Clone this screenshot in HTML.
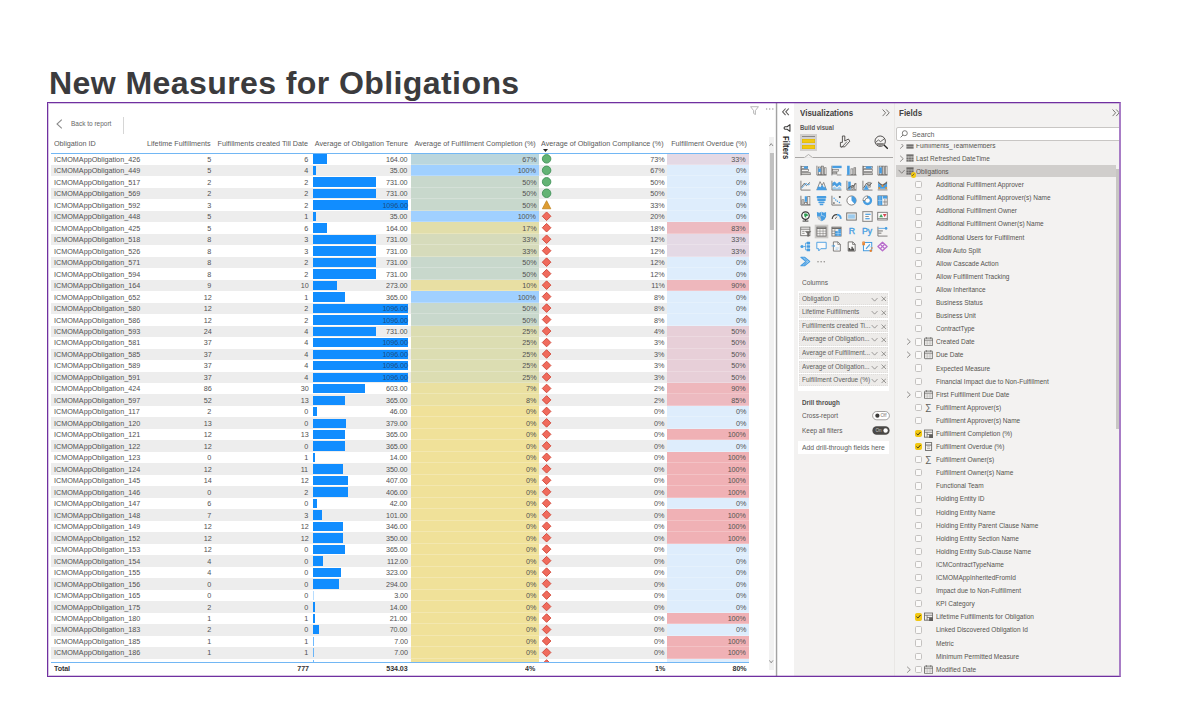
<!DOCTYPE html>
<html lang="en"><head><meta charset="utf-8"><title>New Measures for Obligations</title>
<style>
*{box-sizing:border-box}
html,body{margin:0;padding:0;background:#fff}
body{width:1182px;height:710px;position:relative;overflow:hidden;font-family:"Liberation Sans",sans-serif;color:#444}
.abs,.r,.r>*,.f,.f>*,.vi,.well,.well>*{position:absolute}
h1{position:absolute;left:49.2px;top:67.4px;margin:0;font:bold 30.7px/34px "Liberation Sans",sans-serif;letter-spacing:.37px;color:#3b3b3d;white-space:nowrap;transform:scaleX(1.045);transform-origin:0 0}
#frame{position:absolute;left:47px;top:102px;width:1074px;height:575px;border:1px solid #7030a0;border-right:2px solid #a87cc6;background:#fff;overflow:hidden}
#frame:before{content:"";position:absolute;left:0;top:0;right:0;bottom:0;border:1px solid rgba(112,48,160,.28);border-right:0;pointer-events:none;z-index:50}
/* everything inside #in is positioned in page coordinates */
#in{position:absolute;left:-48px;top:-103px;width:1182px;height:710px}
/* table */
.hd{position:absolute;top:138.1px;height:11px;font-size:7.9px;line-height:11px;color:#5a5a5a;white-space:nowrap;transform:scaleX(.914);transform-origin:100% 50%}
.r{left:51px;width:698px;height:11.48px;font-size:7.9px;line-height:12.1px;color:#525252;white-space:nowrap}
.r>span{transform:scaleX(.914);transform-origin:100% 50%;letter-spacing:-.1px}
.r>span.c1{transform-origin:0 50%;letter-spacing:0}
.r.alt{background:#ededed}
.r>span{top:.4px;height:11.48px}
.r .c1{left:2.6px}
.r .c2{right:537.7px}
.r .c3{right:440.6px}
.r .c4{right:341.4px}
.r .c4.w{color:#1a4f86}
.r .c5{right:213px}
.r .c6{right:84.3px}
.r .c7{right:3.1px}
.r .bar{left:262.4px;top:1.1px;height:9.3px;background:#118dff}
.r .cb{left:359.6px;width:128px;top:0;height:11.48px;box-shadow:inset 0 -1px 0 rgba(255,255,255,.22)}
.r .ob{left:616.4px;width:81.6px;top:0;height:11.48px;box-shadow:inset 0 -1px 0 rgba(255,255,255,.22)}
.r .ic{left:490.15px;top:.1px;width:10px;height:10px}
.ln{position:absolute;left:51px;width:698px;height:1px;background:#72b7f4}
.tot{position:absolute;top:663.2px;height:11px;font:bold 7.9px/11px "Liberation Sans",sans-serif;letter-spacing:-.1px;color:#333;white-space:nowrap;transform:scaleX(.9);transform-origin:100% 50%}
/* panes */
#viz{position:absolute;left:794px;top:103px;width:99.5px;height:574px;background:#f3f2f1}
#fld{position:absolute;left:893.5px;top:103px;width:227px;height:574px;background:#f3f2f1;border-left:1px solid #e9e7e5}
.pt{position:absolute;font:bold 8.75px/12px "Liberation Sans",sans-serif;color:#43413f;white-space:nowrap;transform:scaleX(.914);transform-origin:0 50%}
.sm{position:absolute;font-size:7.1px;line-height:10px;color:#5b5957;white-space:nowrap;transform:scaleX(.914);transform-origin:0 50%}
.vi{width:11px;height:11px}
.vi svg{position:absolute;left:0;top:0;width:11px;height:11px;overflow:visible}
.vi.sel{background:#cbc9c7;box-shadow:0 0 0 1.3px #cbc9c7}
.vt{position:absolute;left:0;top:.6px;width:11px;text-align:center;font:8.8px/11px "Liberation Sans",sans-serif;color:#479de1;letter-spacing:-.2px;-webkit-text-stroke:.35px #479de1}
.vt.py{font-size:8.8px;left:-1px;top:-.2px;width:13px}
.dots{position:absolute;left:.6px;top:.3px;width:12px;font:bold 9px/11px "Liberation Sans",sans-serif;color:#8a8886;letter-spacing:.4px}
.well{left:799.2px;width:88.6px;height:12.2px;background:#edebe9;border:1px dotted #e0dedc;font-size:7.1px;line-height:10.4px;color:#605e5c;white-space:nowrap}
.well span{left:1.4px;top:0;transform:scaleX(.914);transform-origin:0 50%}
.well .wv{right:8.6px;top:3px;width:7.2px;height:5.4px}
.well .wx{right:.6px;top:2.8px;width:5.6px;height:5.6px}
/* fields */
.f{left:896px;width:220px;height:13px;font-size:7.2px;line-height:13px;color:#55534f;white-space:nowrap}
.f .ck{left:18.9px;top:2.9px;width:7.3px;height:7.3px;border:1px solid #c4c2c0;border-radius:1.6px;background:#fbfaf9}
.f .ck.on{background:#f2c811;border-color:#f2c811}
.f .ck svg{position:absolute;left:-.8px;top:-.8px;width:7px;height:7px}
.f .chev{left:10.4px;top:2.9px;width:5.6px;height:7.4px}
.f .ti{left:28.2px;top:1.9px;width:9.2px;height:9.2px}
.f .sg{left:29px;top:0;font-size:9px;line-height:13px;color:#605e5c}
.f .fl{left:39.8px;top:0;transform:scaleX(.905);transform-origin:0 50%}
</style></head>
<body>
<h1>New Measures for Obligations</h1>
<div id="frame"><div id="in">

<!-- back to report -->
<svg class="abs" style="left:56.4px;top:119px;width:7px;height:10px" viewBox="0 0 7 10"><path d="M5.8.6 1 5 5.8 9.4" fill="none" stroke="#8a8a8a" stroke-width="1.05"/></svg>
<div class="sm" style="left:70.6px;top:119px;font-size:7.1px;color:#666">Back to report</div>
<div class="abs" style="left:123.4px;top:116.6px;width:1px;height:17px;background:#d6d6d6"></div>

<!-- visual header icons -->
<svg class="abs" style="left:749.6px;top:105.6px;width:9px;height:9.6px" viewBox="0 0 9 9.6"><path d="M.6.7H8.4L5.4 4.6V8.6L3.6 7.4V4.6z" fill="none" stroke="#a6a6a6" stroke-width=".8" stroke-linejoin="round"/></svg>
<svg class="abs" style="left:765px;top:107px;width:10px;height:4px" viewBox="0 0 10 4"><circle cx="1.6" cy="2.1" r=".75" fill="#a3a3a3"/><circle cx="4.7" cy="2.1" r=".75" fill="#a3a3a3"/><circle cx="7.8" cy="2.1" r=".75" fill="#a3a3a3"/></svg>

<!-- header -->
<div class="hd" style="left:53.5px;transform-origin:0 50%">Obligation ID</div>
<div class="hd" style="right:971px">Lifetime Fulfillments</div>
<div class="hd" style="right:874.2px">Fulfillments created Till Date</div>
<div class="hd" style="right:774.2px">Average of Obligation Tenure</div>
<div class="hd" style="right:646.6px">Average of Fulfillment Completion (%)</div>
<div class="hd" style="left:541.2px;transform-origin:0 50%">Average of Obligation Compliance (%)</div>
<div class="hd" style="right:435.4px">Fulfillment Overdue (%)</div>
<svg class="abs" style="left:542.6px;top:149.2px;width:5px;height:3px" viewBox="0 0 5 3"><path d="M0 0H5L2.5 3z" fill="#252423"/></svg>

<!-- rows -->
<div class="abs" style="left:0;top:152.9px;width:776px;height:509.1px;overflow:hidden"><div class="abs" style="left:0;top:-152.9px;width:776px;height:700px">
<div class="r" style="top:153.40px"><i class="cb" style="background:#bad6dd"></i><i class="ob" style="background:#e4d9e5"></i><i class="bar" style="width:14.1px"></i><span class="c1">ICMOMAppObligation_426</span><span class="c2">5</span><span class="c3">6</span><span class="c4">164.00</span><span class="c5">67%</span><span class="c6">73%</span><span class="c7">33%</span></div>
<div class="r alt" style="top:164.88px"><i class="cb" style="background:#a0d0ff"></i><i class="ob" style="background:#deedfc"></i><i class="bar" style="width:3.0px"></i><span class="c1">ICMOMAppObligation_449</span><span class="c2">5</span><span class="c3">4</span><span class="c4">35.00</span><span class="c5">100%</span><span class="c6">67%</span><span class="c7">0%</span></div>
<div class="r" style="top:176.36px"><i class="cb" style="background:#c8d8cc"></i><i class="ob" style="background:#deedfc"></i><i class="bar" style="width:62.8px"></i><span class="c1">ICMOMAppObligation_517</span><span class="c2">2</span><span class="c3">2</span><span class="c4">731.00</span><span class="c5">50%</span><span class="c6">50%</span><span class="c7">0%</span></div>
<div class="r alt" style="top:187.84px"><i class="cb" style="background:#c8d8cc"></i><i class="ob" style="background:#deedfc"></i><i class="bar" style="width:62.8px"></i><span class="c1">ICMOMAppObligation_569</span><span class="c2">2</span><span class="c3">2</span><span class="c4">731.00</span><span class="c5">50%</span><span class="c6">50%</span><span class="c7">0%</span></div>
<div class="r" style="top:199.32px"><i class="cb" style="background:#c8d8cc"></i><i class="ob" style="background:#deedfc"></i><i class="bar" style="width:94.2px"></i><span class="c1">ICMOMAppObligation_592</span><span class="c2">3</span><span class="c3">2</span><span class="c4 w">1096.00</span><span class="c5">50%</span><span class="c6">33%</span><span class="c7">0%</span></div>
<div class="r alt" style="top:210.80px"><i class="cb" style="background:#a0d0ff"></i><i class="ob" style="background:#deedfc"></i><i class="bar" style="width:3.0px"></i><span class="c1">ICMOMAppObligation_448</span><span class="c2">5</span><span class="c3">1</span><span class="c4">35.00</span><span class="c5">100%</span><span class="c6">20%</span><span class="c7">0%</span></div>
<div class="r" style="top:222.28px"><i class="cb" style="background:#e2deaa"></i><i class="ob" style="background:#edbbc1"></i><i class="bar" style="width:14.1px"></i><span class="c1">ICMOMAppObligation_425</span><span class="c2">5</span><span class="c3">6</span><span class="c4">164.00</span><span class="c5">17%</span><span class="c6">18%</span><span class="c7">83%</span></div>
<div class="r alt" style="top:233.76px"><i class="cb" style="background:#d6dbbb"></i><i class="ob" style="background:#e4d9e5"></i><i class="bar" style="width:62.8px"></i><span class="c1">ICMOMAppObligation_518</span><span class="c2">8</span><span class="c3">3</span><span class="c4">731.00</span><span class="c5">33%</span><span class="c6">12%</span><span class="c7">33%</span></div>
<div class="r" style="top:245.24px"><i class="cb" style="background:#d6dbbb"></i><i class="ob" style="background:#e4d9e5"></i><i class="bar" style="width:62.8px"></i><span class="c1">ICMOMAppObligation_526</span><span class="c2">8</span><span class="c3">3</span><span class="c4">731.00</span><span class="c5">33%</span><span class="c6">12%</span><span class="c7">33%</span></div>
<div class="r alt" style="top:256.72px"><i class="cb" style="background:#c8d8cc"></i><i class="ob" style="background:#deedfc"></i><i class="bar" style="width:62.8px"></i><span class="c1">ICMOMAppObligation_571</span><span class="c2">8</span><span class="c3">2</span><span class="c4">731.00</span><span class="c5">50%</span><span class="c6">12%</span><span class="c7">0%</span></div>
<div class="r" style="top:268.20px"><i class="cb" style="background:#c8d8cc"></i><i class="ob" style="background:#deedfc"></i><i class="bar" style="width:62.8px"></i><span class="c1">ICMOMAppObligation_594</span><span class="c2">8</span><span class="c3">2</span><span class="c4">731.00</span><span class="c5">50%</span><span class="c6">12%</span><span class="c7">0%</span></div>
<div class="r alt" style="top:279.68px"><i class="cb" style="background:#e8dfa3"></i><i class="ob" style="background:#eeb7bc"></i><i class="bar" style="width:23.5px"></i><span class="c1">ICMOMAppObligation_164</span><span class="c2">9</span><span class="c3">10</span><span class="c4">273.00</span><span class="c5">10%</span><span class="c6">11%</span><span class="c7">90%</span></div>
<div class="r" style="top:291.16px"><i class="cb" style="background:#a0d0ff"></i><i class="ob" style="background:#deedfc"></i><i class="bar" style="width:31.4px"></i><span class="c1">ICMOMAppObligation_652</span><span class="c2">12</span><span class="c3">1</span><span class="c4">365.00</span><span class="c5">100%</span><span class="c6">8%</span><span class="c7">0%</span></div>
<div class="r alt" style="top:302.64px"><i class="cb" style="background:#c8d8cc"></i><i class="ob" style="background:#deedfc"></i><i class="bar" style="width:94.2px"></i><span class="c1">ICMOMAppObligation_580</span><span class="c2">12</span><span class="c3">2</span><span class="c4 w">1096.00</span><span class="c5">50%</span><span class="c6">8%</span><span class="c7">0%</span></div>
<div class="r" style="top:314.12px"><i class="cb" style="background:#c8d8cc"></i><i class="ob" style="background:#deedfc"></i><i class="bar" style="width:94.2px"></i><span class="c1">ICMOMAppObligation_586</span><span class="c2">12</span><span class="c3">2</span><span class="c4 w">1096.00</span><span class="c5">50%</span><span class="c6">8%</span><span class="c7">0%</span></div>
<div class="r alt" style="top:325.60px"><i class="cb" style="background:#dcddb2"></i><i class="ob" style="background:#e7cfd8"></i><i class="bar" style="width:62.8px"></i><span class="c1">ICMOMAppObligation_593</span><span class="c2">24</span><span class="c3">4</span><span class="c4">731.00</span><span class="c5">25%</span><span class="c6">4%</span><span class="c7">50%</span></div>
<div class="r" style="top:337.08px"><i class="cb" style="background:#dcddb2"></i><i class="ob" style="background:#e7cfd8"></i><i class="bar" style="width:94.2px"></i><span class="c1">ICMOMAppObligation_581</span><span class="c2">37</span><span class="c3">4</span><span class="c4 w">1096.00</span><span class="c5">25%</span><span class="c6">3%</span><span class="c7">50%</span></div>
<div class="r alt" style="top:348.56px"><i class="cb" style="background:#dcddb2"></i><i class="ob" style="background:#e7cfd8"></i><i class="bar" style="width:94.2px"></i><span class="c1">ICMOMAppObligation_585</span><span class="c2">37</span><span class="c3">4</span><span class="c4 w">1096.00</span><span class="c5">25%</span><span class="c6">3%</span><span class="c7">50%</span></div>
<div class="r" style="top:360.04px"><i class="cb" style="background:#dcddb2"></i><i class="ob" style="background:#e7cfd8"></i><i class="bar" style="width:94.2px"></i><span class="c1">ICMOMAppObligation_589</span><span class="c2">37</span><span class="c3">4</span><span class="c4 w">1096.00</span><span class="c5">25%</span><span class="c6">3%</span><span class="c7">50%</span></div>
<div class="r alt" style="top:371.52px"><i class="cb" style="background:#dcddb2"></i><i class="ob" style="background:#e7cfd8"></i><i class="bar" style="width:94.2px"></i><span class="c1">ICMOMAppObligation_591</span><span class="c2">37</span><span class="c3">4</span><span class="c4 w">1096.00</span><span class="c5">25%</span><span class="c6">3%</span><span class="c7">50%</span></div>
<div class="r" style="top:383.00px"><i class="cb" style="background:#eae0a0"></i><i class="ob" style="background:#eeb7bc"></i><i class="bar" style="width:51.8px"></i><span class="c1">ICMOMAppObligation_424</span><span class="c2">86</span><span class="c3">30</span><span class="c4">603.00</span><span class="c5">7%</span><span class="c6">2%</span><span class="c7">90%</span></div>
<div class="r alt" style="top:394.48px"><i class="cb" style="background:#eae0a1"></i><i class="ob" style="background:#edbac0"></i><i class="bar" style="width:31.4px"></i><span class="c1">ICMOMAppObligation_597</span><span class="c2">52</span><span class="c3">13</span><span class="c4">365.00</span><span class="c5">8%</span><span class="c6">2%</span><span class="c7">85%</span></div>
<div class="r" style="top:405.96px"><i class="cb" style="background:#f0e199"></i><i class="ob" style="background:#deedfc"></i><i class="bar" style="width:4.0px"></i><span class="c1">ICMOMAppObligation_117</span><span class="c2">2</span><span class="c3">0</span><span class="c4">46.00</span><span class="c5">0%</span><span class="c6">0%</span><span class="c7">0%</span></div>
<div class="r alt" style="top:417.44px"><i class="cb" style="background:#f0e199"></i><i class="ob" style="background:#deedfc"></i><i class="bar" style="width:32.6px"></i><span class="c1">ICMOMAppObligation_120</span><span class="c2">13</span><span class="c3">0</span><span class="c4">379.00</span><span class="c5">0%</span><span class="c6">0%</span><span class="c7">0%</span></div>
<div class="r" style="top:428.92px"><i class="cb" style="background:#f0e199"></i><i class="ob" style="background:#f0b1b5"></i><i class="bar" style="width:31.4px"></i><span class="c1">ICMOMAppObligation_121</span><span class="c2">12</span><span class="c3">13</span><span class="c4">365.00</span><span class="c5">0%</span><span class="c6">0%</span><span class="c7">100%</span></div>
<div class="r alt" style="top:440.40px"><i class="cb" style="background:#f0e199"></i><i class="ob" style="background:#deedfc"></i><i class="bar" style="width:31.4px"></i><span class="c1">ICMOMAppObligation_122</span><span class="c2">12</span><span class="c3">0</span><span class="c4">365.00</span><span class="c5">0%</span><span class="c6">0%</span><span class="c7">0%</span></div>
<div class="r" style="top:451.88px"><i class="cb" style="background:#f0e199"></i><i class="ob" style="background:#f0b1b5"></i><i class="bar" style="width:1.2px"></i><span class="c1">ICMOMAppObligation_123</span><span class="c2">0</span><span class="c3">1</span><span class="c4">14.00</span><span class="c5">0%</span><span class="c6">0%</span><span class="c7">100%</span></div>
<div class="r alt" style="top:463.36px"><i class="cb" style="background:#f0e199"></i><i class="ob" style="background:#f0b1b5"></i><i class="bar" style="width:30.1px"></i><span class="c1">ICMOMAppObligation_124</span><span class="c2">12</span><span class="c3">11</span><span class="c4">350.00</span><span class="c5">0%</span><span class="c6">0%</span><span class="c7">100%</span></div>
<div class="r" style="top:474.84px"><i class="cb" style="background:#f0e199"></i><i class="ob" style="background:#f0b1b5"></i><i class="bar" style="width:35.0px"></i><span class="c1">ICMOMAppObligation_145</span><span class="c2">14</span><span class="c3">12</span><span class="c4">407.00</span><span class="c5">0%</span><span class="c6">0%</span><span class="c7">100%</span></div>
<div class="r alt" style="top:486.32px"><i class="cb" style="background:#f0e199"></i><i class="ob" style="background:#f0b1b5"></i><i class="bar" style="width:34.9px"></i><span class="c1">ICMOMAppObligation_146</span><span class="c2">0</span><span class="c3">2</span><span class="c4">406.00</span><span class="c5">0%</span><span class="c6">0%</span><span class="c7">100%</span></div>
<div class="r" style="top:497.80px"><i class="cb" style="background:#f0e199"></i><i class="ob" style="background:#deedfc"></i><i class="bar" style="width:3.6px"></i><span class="c1">ICMOMAppObligation_147</span><span class="c2">6</span><span class="c3">0</span><span class="c4">42.00</span><span class="c5">0%</span><span class="c6">0%</span><span class="c7">0%</span></div>
<div class="r alt" style="top:509.28px"><i class="cb" style="background:#f0e199"></i><i class="ob" style="background:#f0b1b5"></i><i class="bar" style="width:8.7px"></i><span class="c1">ICMOMAppObligation_148</span><span class="c2">7</span><span class="c3">3</span><span class="c4">101.00</span><span class="c5">0%</span><span class="c6">0%</span><span class="c7">100%</span></div>
<div class="r" style="top:520.76px"><i class="cb" style="background:#f0e199"></i><i class="ob" style="background:#f0b1b5"></i><i class="bar" style="width:29.7px"></i><span class="c1">ICMOMAppObligation_149</span><span class="c2">12</span><span class="c3">12</span><span class="c4">346.00</span><span class="c5">0%</span><span class="c6">0%</span><span class="c7">100%</span></div>
<div class="r alt" style="top:532.24px"><i class="cb" style="background:#f0e199"></i><i class="ob" style="background:#f0b1b5"></i><i class="bar" style="width:30.1px"></i><span class="c1">ICMOMAppObligation_152</span><span class="c2">12</span><span class="c3">12</span><span class="c4">350.00</span><span class="c5">0%</span><span class="c6">0%</span><span class="c7">100%</span></div>
<div class="r" style="top:543.72px"><i class="cb" style="background:#f0e199"></i><i class="ob" style="background:#deedfc"></i><i class="bar" style="width:31.4px"></i><span class="c1">ICMOMAppObligation_153</span><span class="c2">12</span><span class="c3">0</span><span class="c4">365.00</span><span class="c5">0%</span><span class="c6">0%</span><span class="c7">0%</span></div>
<div class="r alt" style="top:555.20px"><i class="cb" style="background:#f0e199"></i><i class="ob" style="background:#deedfc"></i><i class="bar" style="width:9.6px"></i><span class="c1">ICMOMAppObligation_154</span><span class="c2">4</span><span class="c3">0</span><span class="c4">112.00</span><span class="c5">0%</span><span class="c6">0%</span><span class="c7">0%</span></div>
<div class="r" style="top:566.68px"><i class="cb" style="background:#f0e199"></i><i class="ob" style="background:#deedfc"></i><i class="bar" style="width:27.8px"></i><span class="c1">ICMOMAppObligation_155</span><span class="c2">4</span><span class="c3">0</span><span class="c4">323.00</span><span class="c5">0%</span><span class="c6">0%</span><span class="c7">0%</span></div>
<div class="r alt" style="top:578.16px"><i class="cb" style="background:#f0e199"></i><i class="ob" style="background:#deedfc"></i><i class="bar" style="width:25.3px"></i><span class="c1">ICMOMAppObligation_156</span><span class="c2">0</span><span class="c3">0</span><span class="c4">294.00</span><span class="c5">0%</span><span class="c6">0%</span><span class="c7">0%</span></div>
<div class="r" style="top:589.64px"><i class="cb" style="background:#f0e199"></i><i class="ob" style="background:#deedfc"></i><i class="bar" style="width:1.0px;opacity:0.30"></i><span class="c1">ICMOMAppObligation_165</span><span class="c2">0</span><span class="c3">0</span><span class="c4">3.00</span><span class="c5">0%</span><span class="c6">0%</span><span class="c7">0%</span></div>
<div class="r alt" style="top:601.12px"><i class="cb" style="background:#f0e199"></i><i class="ob" style="background:#deedfc"></i><i class="bar" style="width:1.2px"></i><span class="c1">ICMOMAppObligation_175</span><span class="c2">2</span><span class="c3">0</span><span class="c4">14.00</span><span class="c5">0%</span><span class="c6">0%</span><span class="c7">0%</span></div>
<div class="r" style="top:612.60px"><i class="cb" style="background:#f0e199"></i><i class="ob" style="background:#f0b1b5"></i><i class="bar" style="width:1.8px"></i><span class="c1">ICMOMAppObligation_180</span><span class="c2">1</span><span class="c3">1</span><span class="c4">21.00</span><span class="c5">0%</span><span class="c6">0%</span><span class="c7">100%</span></div>
<div class="r alt" style="top:624.08px"><i class="cb" style="background:#f0e199"></i><i class="ob" style="background:#deedfc"></i><i class="bar" style="width:6.0px"></i><span class="c1">ICMOMAppObligation_183</span><span class="c2">2</span><span class="c3">0</span><span class="c4">70.00</span><span class="c5">0%</span><span class="c6">0%</span><span class="c7">0%</span></div>
<div class="r" style="top:635.56px"><i class="cb" style="background:#f0e199"></i><i class="ob" style="background:#f0b1b5"></i><i class="bar" style="width:1.0px;opacity:0.60"></i><span class="c1">ICMOMAppObligation_185</span><span class="c2">1</span><span class="c3">1</span><span class="c4">7.00</span><span class="c5">0%</span><span class="c6">0%</span><span class="c7">100%</span></div>
<div class="r alt" style="top:647.04px"><i class="cb" style="background:#f0e199"></i><i class="ob" style="background:#f0b1b5"></i><i class="bar" style="width:1.0px;opacity:0.60"></i><span class="c1">ICMOMAppObligation_186</span><span class="c2">1</span><span class="c3">1</span><span class="c4">7.00</span><span class="c5">0%</span><span class="c6">0%</span><span class="c7">100%</span></div>
<div class="r" style="top:658.52px"><i class="cb" style="background:#f0e199"></i><i class="ob" style="background:#deedfc"></i><i class="bar" style="width:1.0px;opacity:0.60"></i><span class="c1">ICMOMAppObligation_187</span><span class="c2">1</span><span class="c3">0</span><span class="c4">7.00</span><span class="c5">0%</span><span class="c6">0%</span><span class="c7">0%</span></div>
</div></div>
<svg class="abs" style="left:540px;top:153px;width:13px;height:509px" viewBox="0 0 13 509"><g transform="translate(6.6 5.85)"><circle r="4.25" fill="#63b374" stroke="#43925a" stroke-width=".9"/></g><g transform="translate(6.6 17.33)"><circle r="4.25" fill="#63b374" stroke="#43925a" stroke-width=".9"/></g><g transform="translate(6.6 28.81)"><circle r="4.25" fill="#63b374" stroke="#43925a" stroke-width=".9"/></g><g transform="translate(6.6 40.29)"><circle r="4.25" fill="#63b374" stroke="#43925a" stroke-width=".9"/></g><g transform="translate(6.6 51.77)"><path d="M0 -4.1 4.2 4H-4.2z" fill="#de9c31" stroke="#c2841f" stroke-width=".8" stroke-linejoin="round"/></g><g transform="translate(6.6 63.25)"><path d="M0 -4.3 4.3 0 0 4.3 -4.3 0z" fill="#f06b5d" stroke="#cf4537" stroke-width=".9" stroke-linejoin="round"/></g><g transform="translate(6.6 74.73)"><path d="M0 -4.3 4.3 0 0 4.3 -4.3 0z" fill="#f06b5d" stroke="#cf4537" stroke-width=".9" stroke-linejoin="round"/></g><g transform="translate(6.6 86.21)"><path d="M0 -4.3 4.3 0 0 4.3 -4.3 0z" fill="#f06b5d" stroke="#cf4537" stroke-width=".9" stroke-linejoin="round"/></g><g transform="translate(6.6 97.69)"><path d="M0 -4.3 4.3 0 0 4.3 -4.3 0z" fill="#f06b5d" stroke="#cf4537" stroke-width=".9" stroke-linejoin="round"/></g><g transform="translate(6.6 109.17)"><path d="M0 -4.3 4.3 0 0 4.3 -4.3 0z" fill="#f06b5d" stroke="#cf4537" stroke-width=".9" stroke-linejoin="round"/></g><g transform="translate(6.6 120.65)"><path d="M0 -4.3 4.3 0 0 4.3 -4.3 0z" fill="#f06b5d" stroke="#cf4537" stroke-width=".9" stroke-linejoin="round"/></g><g transform="translate(6.6 132.13)"><path d="M0 -4.3 4.3 0 0 4.3 -4.3 0z" fill="#f06b5d" stroke="#cf4537" stroke-width=".9" stroke-linejoin="round"/></g><g transform="translate(6.6 143.61)"><path d="M0 -4.3 4.3 0 0 4.3 -4.3 0z" fill="#f06b5d" stroke="#cf4537" stroke-width=".9" stroke-linejoin="round"/></g><g transform="translate(6.6 155.09)"><path d="M0 -4.3 4.3 0 0 4.3 -4.3 0z" fill="#f06b5d" stroke="#cf4537" stroke-width=".9" stroke-linejoin="round"/></g><g transform="translate(6.6 166.57)"><path d="M0 -4.3 4.3 0 0 4.3 -4.3 0z" fill="#f06b5d" stroke="#cf4537" stroke-width=".9" stroke-linejoin="round"/></g><g transform="translate(6.6 178.05)"><path d="M0 -4.3 4.3 0 0 4.3 -4.3 0z" fill="#f06b5d" stroke="#cf4537" stroke-width=".9" stroke-linejoin="round"/></g><g transform="translate(6.6 189.53)"><path d="M0 -4.3 4.3 0 0 4.3 -4.3 0z" fill="#f06b5d" stroke="#cf4537" stroke-width=".9" stroke-linejoin="round"/></g><g transform="translate(6.6 201.01)"><path d="M0 -4.3 4.3 0 0 4.3 -4.3 0z" fill="#f06b5d" stroke="#cf4537" stroke-width=".9" stroke-linejoin="round"/></g><g transform="translate(6.6 212.49)"><path d="M0 -4.3 4.3 0 0 4.3 -4.3 0z" fill="#f06b5d" stroke="#cf4537" stroke-width=".9" stroke-linejoin="round"/></g><g transform="translate(6.6 223.97)"><path d="M0 -4.3 4.3 0 0 4.3 -4.3 0z" fill="#f06b5d" stroke="#cf4537" stroke-width=".9" stroke-linejoin="round"/></g><g transform="translate(6.6 235.45)"><path d="M0 -4.3 4.3 0 0 4.3 -4.3 0z" fill="#f06b5d" stroke="#cf4537" stroke-width=".9" stroke-linejoin="round"/></g><g transform="translate(6.6 246.93)"><path d="M0 -4.3 4.3 0 0 4.3 -4.3 0z" fill="#f06b5d" stroke="#cf4537" stroke-width=".9" stroke-linejoin="round"/></g><g transform="translate(6.6 258.41)"><path d="M0 -4.3 4.3 0 0 4.3 -4.3 0z" fill="#f06b5d" stroke="#cf4537" stroke-width=".9" stroke-linejoin="round"/></g><g transform="translate(6.6 269.89)"><path d="M0 -4.3 4.3 0 0 4.3 -4.3 0z" fill="#f06b5d" stroke="#cf4537" stroke-width=".9" stroke-linejoin="round"/></g><g transform="translate(6.6 281.37)"><path d="M0 -4.3 4.3 0 0 4.3 -4.3 0z" fill="#f06b5d" stroke="#cf4537" stroke-width=".9" stroke-linejoin="round"/></g><g transform="translate(6.6 292.85)"><path d="M0 -4.3 4.3 0 0 4.3 -4.3 0z" fill="#f06b5d" stroke="#cf4537" stroke-width=".9" stroke-linejoin="round"/></g><g transform="translate(6.6 304.33)"><path d="M0 -4.3 4.3 0 0 4.3 -4.3 0z" fill="#f06b5d" stroke="#cf4537" stroke-width=".9" stroke-linejoin="round"/></g><g transform="translate(6.6 315.81)"><path d="M0 -4.3 4.3 0 0 4.3 -4.3 0z" fill="#f06b5d" stroke="#cf4537" stroke-width=".9" stroke-linejoin="round"/></g><g transform="translate(6.6 327.29)"><path d="M0 -4.3 4.3 0 0 4.3 -4.3 0z" fill="#f06b5d" stroke="#cf4537" stroke-width=".9" stroke-linejoin="round"/></g><g transform="translate(6.6 338.77)"><path d="M0 -4.3 4.3 0 0 4.3 -4.3 0z" fill="#f06b5d" stroke="#cf4537" stroke-width=".9" stroke-linejoin="round"/></g><g transform="translate(6.6 350.25)"><path d="M0 -4.3 4.3 0 0 4.3 -4.3 0z" fill="#f06b5d" stroke="#cf4537" stroke-width=".9" stroke-linejoin="round"/></g><g transform="translate(6.6 361.73)"><path d="M0 -4.3 4.3 0 0 4.3 -4.3 0z" fill="#f06b5d" stroke="#cf4537" stroke-width=".9" stroke-linejoin="round"/></g><g transform="translate(6.6 373.21)"><path d="M0 -4.3 4.3 0 0 4.3 -4.3 0z" fill="#f06b5d" stroke="#cf4537" stroke-width=".9" stroke-linejoin="round"/></g><g transform="translate(6.6 384.69)"><path d="M0 -4.3 4.3 0 0 4.3 -4.3 0z" fill="#f06b5d" stroke="#cf4537" stroke-width=".9" stroke-linejoin="round"/></g><g transform="translate(6.6 396.17)"><path d="M0 -4.3 4.3 0 0 4.3 -4.3 0z" fill="#f06b5d" stroke="#cf4537" stroke-width=".9" stroke-linejoin="round"/></g><g transform="translate(6.6 407.65)"><path d="M0 -4.3 4.3 0 0 4.3 -4.3 0z" fill="#f06b5d" stroke="#cf4537" stroke-width=".9" stroke-linejoin="round"/></g><g transform="translate(6.6 419.13)"><path d="M0 -4.3 4.3 0 0 4.3 -4.3 0z" fill="#f06b5d" stroke="#cf4537" stroke-width=".9" stroke-linejoin="round"/></g><g transform="translate(6.6 430.61)"><path d="M0 -4.3 4.3 0 0 4.3 -4.3 0z" fill="#f06b5d" stroke="#cf4537" stroke-width=".9" stroke-linejoin="round"/></g><g transform="translate(6.6 442.09)"><path d="M0 -4.3 4.3 0 0 4.3 -4.3 0z" fill="#f06b5d" stroke="#cf4537" stroke-width=".9" stroke-linejoin="round"/></g><g transform="translate(6.6 453.57)"><path d="M0 -4.3 4.3 0 0 4.3 -4.3 0z" fill="#f06b5d" stroke="#cf4537" stroke-width=".9" stroke-linejoin="round"/></g><g transform="translate(6.6 465.05)"><path d="M0 -4.3 4.3 0 0 4.3 -4.3 0z" fill="#f06b5d" stroke="#cf4537" stroke-width=".9" stroke-linejoin="round"/></g><g transform="translate(6.6 476.53)"><path d="M0 -4.3 4.3 0 0 4.3 -4.3 0z" fill="#f06b5d" stroke="#cf4537" stroke-width=".9" stroke-linejoin="round"/></g><g transform="translate(6.6 488.01)"><path d="M0 -4.3 4.3 0 0 4.3 -4.3 0z" fill="#f06b5d" stroke="#cf4537" stroke-width=".9" stroke-linejoin="round"/></g><g transform="translate(6.6 499.49)"><path d="M0 -4.3 4.3 0 0 4.3 -4.3 0z" fill="#f06b5d" stroke="#cf4537" stroke-width=".9" stroke-linejoin="round"/></g><g transform="translate(6.6 510.97)"><path d="M0 -4.3 4.3 0 0 4.3 -4.3 0z" fill="#f06b5d" stroke="#cf4537" stroke-width=".9" stroke-linejoin="round"/></g></svg>
<div class="ln" style="top:152.9px"></div>
<div class="ln" style="top:661.6px"></div>
<div class="tot" style="left:53.5px;transform-origin:0 50%">Total</div>
<div class="tot" style="right:873.6px">777</div>
<div class="tot" style="right:774.2px">534.03</div>
<div class="tot" style="right:646.6px">4%</div>
<div class="tot" style="right:517.2px">1%</div>
<div class="tot" style="right:435.4px">80%</div>

<!-- table scrollbar -->
<div class="abs" style="left:769px;top:137px;width:5px;height:533px;background:#f1f1f1"></div>
<div class="abs" style="left:770px;top:152.6px;width:3.6px;height:77.6px;background:#c1c1c1"></div>
<svg class="abs" style="left:769.4px;top:142.8px;width:4.4px;height:3.4px" viewBox="0 0 4.4 3.4"><path d="M.4 3 2.2.6 4 3" fill="none" stroke="#666" stroke-width=".7"/></svg>
<svg class="abs" style="left:769.4px;top:660px;width:4.4px;height:3.4px" viewBox="0 0 4.4 3.4"><path d="M.4.4 2.2 2.8 4 .4" fill="none" stroke="#666" stroke-width=".7"/></svg>

<!-- canvas / filter pane divider -->
<div class="abs" style="left:776px;top:103px;width:1px;height:574px;background:#a3a3a3;box-shadow:1px 0 0 rgba(160,160,160,.25),-1px 0 0 rgba(160,160,160,.18)"></div>
<!-- filters pane (collapsed) -->
<svg class="abs" style="left:782.4px;top:108px;width:7.4px;height:7.6px" viewBox="0 0 7.4 7.6"><path d="M3.6.5.6 3.8 3.6 7.1M6.8.5 3.8 3.8 6.8 7.1" fill="none" stroke="#605e5c" stroke-width="1.1"/></svg>
<svg class="abs" style="left:783px;top:124px;width:8px;height:8px" viewBox="0 0 7 7.6"><path d="M6.3.6V7L3.6 5H1.4L.6 3.8 1.4 2.6H3.6z" fill="none" stroke="#3b3a39" stroke-width="1" stroke-linejoin="round"/></svg>
<div class="abs" style="left:780.9px;top:135.8px;width:10px;height:28px;writing-mode:vertical-rl;font:bold 8.5px/10px 'Liberation Sans',sans-serif;color:#2b2a29;white-space:nowrap;transform:scaleY(.914);transform-origin:50% 0">Filters</div>

<!-- visualizations pane -->
<div id="viz"></div>
<div class="pt" style="left:800.2px;top:107.2px">Visualizations</div>
<svg class="abs" style="left:881.6px;top:109px;width:8px;height:7.6px" viewBox="0 0 8 7.6"><path d="M.6.5 3.6 3.8.6 7.1M4.2.5 7.2 3.8 4.2 7.1" fill="none" stroke="#605e5c" stroke-width=".85"/></svg>
<div class="sm" style="left:800.2px;top:122.8px;font-weight:bold;font-size:6.6px;color:#5a5856">Build visual</div>
<div class="abs" style="left:799.6px;top:133.8px;width:17.4px;height:17.2px;background:#d2d0ce"></div>
<div class="abs" style="left:802px;top:135.6px;width:12.8px;height:1px;background:#8a8886"></div>
<div class="abs" style="left:801.6px;top:138.5px;width:13.5px;height:4.4px;background:#f2c811;box-shadow:inset 0 0 0 .5px #d9b30a"></div>
<div class="abs" style="left:801.6px;top:144.5px;width:13.5px;height:4.2px;background:#f2c811;box-shadow:inset 0 0 0 .5px #d9b30a"></div>
<svg class="abs" style="left:838.4px;top:135.4px;width:13px;height:14px" viewBox="0 0 13 14"><path d="M4.4 1h2.4v5l3.6-2 1.4 2.2-5 5.6H2.4V7.4h2z" fill="none" stroke="#484644" stroke-width=".9" stroke-linejoin="round"/><path d="M3.4 12.6 9 6.6" stroke="#484644" stroke-width=".8"/></svg>
<svg class="abs" style="left:873.6px;top:135px;width:14.6px;height:14.6px" viewBox="0 0 14.6 14.6"><circle cx="6.2" cy="6.2" r="5.2" fill="none" stroke="#484644" stroke-width=".95"/><path d="M10 10 13.8 13.8" stroke="#252423" stroke-width="1.3"/><path d="M1.6 7.4 4.4 5 6.6 6.6 10.6 3.6" fill="none" stroke="#484644" stroke-width=".8"/><path d="M2.4 8h7.4v1.6L6.2 11.2 2.4 9.4z" fill="#8a8886"/></svg>
<div class="abs" style="left:795px;top:157px;width:98px;height:1px;background:#a9a7a5"></div>
<svg class="abs" style="left:803.6px;top:154px;width:9px;height:4.4px" viewBox="0 0 9 4.4"><path d="M0 4.4H9z" stroke="#f3f2f1" stroke-width="2.4"/><path d="M.4 3.6 4.5.5 8.6 3.6" fill="#f3f2f1" stroke="#a19f9d" stroke-width=".8"/></svg>
<div class="vi" style="left:800.25px;top:165.05px"><svg viewBox="0 0 12 12"><path d="M1 .8V11.4" fill="none" stroke="#6b6967" stroke-width="0.9"/><rect x="1.4" y="1.6" width="7" height="2.2" fill="none" stroke="#6b6967" stroke-width="0.7"/><rect x="4.4" y="1.5" width="4.2" height="2.4" fill="#479de1"/><rect x="1.4" y="5" width="8" height="2.2" fill="none" stroke="#6b6967" stroke-width="0.7"/><rect x="1.4" y="8.4" width="9.8" height="2.2" fill="#c8c6c4" stroke="#6b6967" stroke-width="0.7"/></svg></div>
<div class="vi" style="left:815.57px;top:165.05px"><svg viewBox="0 0 12 12"><path d="M1 .8V11H11.5" fill="none" stroke="#6b6967" stroke-width="0.9"/><rect x="2.6" y="2.2" width="2.6" height="8.4" fill="none" stroke="#6b6967" stroke-width="0.7"/><rect x="2.5" y="3.8" width="2.8" height="3.8" fill="#479de1"/><rect x="6.1" y="1.2" width="2.1" height="9.4" fill="#c8c6c4" stroke="#6b6967" stroke-width="0.7"/><rect x="9.1" y="3" width="1.9" height="7.6" fill="none" stroke="#6b6967" stroke-width="0.7"/></svg></div>
<div class="vi" style="left:830.89px;top:165.05px"><svg viewBox="0 0 12 12"><path d="M1 .8V11.4" fill="none" stroke="#6b6967" stroke-width="0.9"/><rect x="1.4" y="0.8" width="10.2" height="2.6" fill="#479de1"/><rect x="1.4" y="4.7" width="6.6" height="2" fill="none" stroke="#6b6967" stroke-width="0.7"/><rect x="1.4" y="7.8" width="5" height="2" fill="#c8c6c4" stroke="#6b6967" stroke-width="0.7"/><path d="M6.4 10.9h5" fill="none" stroke="#6b6967" stroke-width="0.8"/></svg></div>
<div class="vi" style="left:846.21px;top:165.05px"><svg viewBox="0 0 12 12"><path d="M.6 11H11.6" fill="none" stroke="#6b6967" stroke-width="0.9"/><rect x="1.2" y="0.8" width="2.8" height="10" fill="#479de1"/><rect x="5.4" y="4.2" width="2" height="6.4" fill="none" stroke="#6b6967" stroke-width="0.7"/><rect x="8.6" y="3" width="2" height="7.6" fill="#c8c6c4" stroke="#6b6967" stroke-width="0.7"/></svg></div>
<div class="vi" style="left:861.53px;top:165.05px"><svg viewBox="0 0 12 12"><path d="M1 .8V11.4" fill="none" stroke="#6b6967" stroke-width="0.9"/><rect x="1.4" y="1.6" width="9.8" height="2.2" fill="none" stroke="#6b6967" stroke-width="0.7"/><rect x="4.2" y="1.5" width="6.2" height="2.4" fill="#479de1"/><rect x="1.4" y="5" width="9.8" height="2.2" fill="none" stroke="#6b6967" stroke-width="0.7"/><rect x="1.4" y="8.4" width="9.8" height="2.2" fill="#c8c6c4" stroke="#6b6967" stroke-width="0.7"/></svg></div>
<div class="vi" style="left:876.85px;top:165.05px"><svg viewBox="0 0 12 12"><path d="M1 .8V11H11.5" fill="none" stroke="#6b6967" stroke-width="0.9"/><rect x="2.6" y="1.2" width="2.6" height="9.4" fill="none" stroke="#6b6967" stroke-width="0.7"/><rect x="2.5" y="2.6" width="2.8" height="6.6" fill="#479de1"/><rect x="6.1" y="1.2" width="2.1" height="9.4" fill="#c8c6c4" stroke="#6b6967" stroke-width="0.7"/><rect x="9.1" y="1.2" width="1.9" height="9.4" fill="none" stroke="#6b6967" stroke-width="0.7"/></svg></div>
<div class="vi" style="left:800.25px;top:180.25px"><svg viewBox="0 0 12 12"><path d="M1 .8V11H11.5" fill="none" stroke="#6b6967" stroke-width="0.9"/><path d="M1.5 8 4.5 3.6 7 6 10.8 2.6" fill="none" stroke="#4a4846" stroke-width="0.8"/><path d="M1.5 9.2 4 6.6 6.6 3.4 8.6 5.6 11 4.2" fill="none" stroke="#479de1" stroke-width="0.9"/></svg></div>
<div class="vi" style="left:815.57px;top:180.25px"><svg viewBox="0 0 12 12"><path d="M.8 11 4.4 1.8 6.6 6 8.4 2.6 11.4 11" fill="none" stroke="#6b6967" stroke-width="0.8" stroke-linejoin="round"/><path d="M.6 11.2 2.6 6.8 4.8 8 6.6 5.2 8.8 8.2 10 7.2 11.6 11.2z" fill="#479de1"/></svg></div>
<div class="vi" style="left:830.89px;top:180.25px"><svg viewBox="0 0 12 12"><path d="M1.4 3.2 4 1.6 6.4 4 9 1.8 11.2 3.4V7L9 5.4 6.4 7.8 4 5.4 1.4 7z" fill="#479de1"/><path d="M1.4 8.6 4 7 6.4 9.4 9 7.2 11.2 8.8V10.6H1.4z" fill="#9ccbee"/><path d="M1 .8V11H11.5" fill="none" stroke="#6b6967" stroke-width="0.8"/></svg></div>
<div class="vi" style="left:846.21px;top:180.25px"><svg viewBox="0 0 12 12"><path d="M1 .8V11H11.5" fill="none" stroke="#6b6967" stroke-width="0.9"/><rect x="2.4" y="1.8" width="2.8" height="8.8" fill="#479de1"/><rect x="6.3" y="5.8" width="1.9" height="4.8" fill="#c8c6c4" stroke="#6b6967" stroke-width="0.6"/><rect x="9.1" y="4.2" width="1.9" height="6.4" fill="none" stroke="#6b6967" stroke-width="0.6"/><path d="M1.6 9.6 4.6 7.2 7 8 11 3.4" fill="none" stroke="#4a4846" stroke-width="0.9"/></svg></div>
<div class="vi" style="left:861.53px;top:180.25px"><svg viewBox="0 0 12 12"><path d="M1 .8V11H11.5" fill="none" stroke="#6b6967" stroke-width="0.9"/><rect x="6.4" y="2.4" width="2.6" height="5.4" fill="#c8c6c4" stroke="#6b6967" stroke-width="0.6"/><path d="M1.8 10.6 4.6 5.2 7.6 10.6z" fill="#479de1"/><path d="M1.6 9 5 3.4 7.6 6.2 11 3" fill="none" stroke="#4a4846" stroke-width="0.9"/></svg></div>
<div class="vi" style="left:876.85px;top:180.25px"><svg viewBox="0 0 12 12"><path d="M1.2 1.4 4 3.8 6 4.8 8.6 3.4 11 1.4V4L8.6 5.6 6 7 4 5.8 1.2 3.6z" fill="#6b6967"/><path d="M1.2 3.2 4 5.6 6 6.8 8.6 5.4 11 3.6V9.6H1.2z" fill="#479de1"/><circle cx="2.4" cy="8.6" r="1.1" fill="#e8912d"/><circle cx="6" cy="6.6" r="1.1" fill="#e8912d"/><circle cx="10" cy="8.6" r="1.1" fill="#e8912d"/><path d="M.8 10.8h10.6" fill="none" stroke="#6b6967" stroke-width="0.9"/></svg></div>
<div class="vi" style="left:800.25px;top:195.45px"><svg viewBox="0 0 12 12"><path d="M1 .8V11H11.5" fill="none" stroke="#6b6967" stroke-width="0.9"/><rect x="2" y="5.2" width="2.4" height="5.4" fill="#c8c6c4" stroke="#6b6967" stroke-width="0.6"/><rect x="5.2" y="1.4" width="2.4" height="6" fill="#479de1"/><rect x="5.2" y="8.2" width="2.4" height="2.4" fill="#fff" stroke="#4a4846" stroke-width="0.6"/><rect x="8.4" y="1.6" width="2.4" height="9" fill="none" stroke="#6b6967" stroke-width="0.7"/></svg></div>
<div class="vi" style="left:815.57px;top:195.45px"><svg viewBox="0 0 12 12"><rect x="0.8" y="1" width="10.4" height="2.7" fill="#479de1" rx=".8"/><rect x="1.4" y="4.2" width="9.2" height="2.3" fill="#479de1" rx=".7"/><rect x="2.6" y="7" width="6.8" height="2" fill="#479de1" rx=".7"/><rect x="4" y="9.5" width="4" height="1.6" fill="#479de1" rx=".6"/></svg></div>
<div class="vi" style="left:830.89px;top:195.45px"><svg viewBox="0 0 12 12"><path d="M1 .8V11H11.5" fill="none" stroke="#6b6967" stroke-width="0.9"/><circle cx="3.4" cy="3.6" r=".8" fill="#479de1"/><circle cx="5.2" cy="5.4" r=".8" fill="#479de1"/><circle cx="7" cy="6.8" r=".8" fill="#479de1"/><circle cx="9.2" cy="8.2" r=".8" fill="#479de1"/><circle cx="9.6" cy="2.2" r="1.1" fill="#4a4846"/><circle cx="3.2" cy="8.8" r=".9" fill="#4a4846"/></svg></div>
<div class="vi" style="left:846.21px;top:195.45px"><svg viewBox="0 0 12 12"><circle cx="6" cy="6" r="5" fill="#fff" stroke="#6b6967" stroke-width=".9"/><path d="M6 1A5 5 0 0 1 9.4 9.7L6 6z" fill="#479de1"/></svg></div>
<div class="vi" style="left:861.53px;top:195.45px"><svg viewBox="0 0 12 12"><circle cx="6" cy="6" r="3.8" fill="none" stroke="#479de1" stroke-width="2.5"/><circle cx="6" cy="6" r="1.9" fill="#fff"/><path d="M6 2.2A3.8 3.8 0 0 0 2.2 6" fill="none" stroke="#faf9f8" stroke-width="2.5"/><path d="M6 .95A5.05 5.05 0 0 0 .95 6H3.45A2.55 2.55 0 0 1 6 3.45z" fill="none" stroke="#6b6967" stroke-width="0.7"/></svg></div>
<div class="vi" style="left:876.85px;top:195.45px"><svg viewBox="0 0 12 12"><rect x="0.9" y="0.9" width="10.2" height="10.2" fill="none" stroke="#6b6967" stroke-width="0.8"/><rect x="0.9" y="0.9" width="4.8" height="10.2" fill="#479de1"/><rect x="6.4" y="0.9" width="4.7" height="3" fill="#479de1"/><path d="M.9 6h4.8M3.2 .9v10.2" fill="none" stroke="#cfe5f6" stroke-width="0.5"/><path d="M6.2 7.6h4.8M8.6 4.4v6.6" fill="none" stroke="#6b6967" stroke-width="0.7"/></svg></div>
<div class="vi" style="left:800.25px;top:210.65px"><svg viewBox="0 0 12 12"><circle cx="6" cy="5" r="4.1" fill="#fff" stroke="#3b3a39" stroke-width="1.3"/><path d="M5 2.4 8.2 3 8.6 5.4 6.6 5.6 6.8 7.6 5 6.4 4.4 4z" fill="#2f9e52"/><path d="M2.8 11h6.4" fill="none" stroke="#3b3a39" stroke-width="1.1"/><path d="M6 9.2v1.6" fill="none" stroke="#3b3a39" stroke-width="1"/></svg></div>
<div class="vi" style="left:815.57px;top:210.65px"><svg viewBox="0 0 12 12"><path d="M1 1.2 3.6 2 6 .9 8.6 2 11 1.2V6.4L9.4 9.2 6.2 11.2 3 9.4 1.2 6.4z" fill="#479de1"/><path d="M1.3 5.6 4.6 6.2 6.2 11 3 9.4 1.3 6.6z" fill="#c8c6c4"/><path d="M6 1V4.6L4.4 6.2M6 4.6 9.6 6" fill="none" stroke="#d6e9f8" stroke-width="0.6"/></svg></div>
<div class="vi" style="left:830.89px;top:210.65px"><svg viewBox="0 0 12 12"><path d="M1.3 8.6A4.7 4.7 0 0 1 6.6 4" fill="none" stroke="#4a4846" stroke-width="1.3"/><path d="M6.6 4A4.7 4.7 0 0 1 10.7 8.6" fill="none" stroke="#479de1" stroke-width="2"/><path d="M4.6 8.6 6.4 6.2" fill="none" stroke="#4a4846" stroke-width="0.9"/></svg></div>
<div class="vi" style="left:846.21px;top:210.65px"><svg viewBox="0 0 12 12"><rect x="0.8" y="2.1" width="10.4" height="7.8" fill="none" stroke="#6b6967" stroke-width="1"/><rect x="2.3" y="3.7" width="7.4" height="4.6" fill="#9ccbee"/></svg></div>
<div class="vi" style="left:861.53px;top:210.65px"><svg viewBox="0 0 12 12"><rect x="0.9" y="0.7" width="10.2" height="10.6" fill="#faf9f8" stroke="#8f8d8b" stroke-width="1.2"/><path d="M3.6 3.6H9.4" fill="none" stroke="#479de1" stroke-width="1.3"/><path d="M3.6 6H7.4" fill="none" stroke="#6b6967" stroke-width="0.8"/><path d="M3.6 8.4H8.4" fill="none" stroke="#479de1" stroke-width="1.3"/></svg></div>
<div class="vi" style="left:876.85px;top:210.65px"><svg viewBox="0 0 12 12"><rect x="0.8" y="1.4" width="10.4" height="8.4" fill="#faf9f8" stroke="#6b6967" stroke-width="0.9"/><path d="M.8 8.2h10.4" fill="none" stroke="#6b6967" stroke-width="0.8"/><path d="M2.4 6.8 4.5 3.2 6.6 6.8z" fill="#3fa45b"/><path d="M6.4 3.2 10.4 3.2 8.4 6.8z" fill="#d64550"/></svg></div>
<div class="vi" style="left:800.25px;top:225.85px"><svg viewBox="0 0 12 12"><rect x="0.8" y="1.2" width="10" height="9.4" fill="#faf9f8" stroke="#6b6967" stroke-width="0.9"/><path d="M.8 3.5h10" fill="none" stroke="#6b6967" stroke-width="0.9"/><path d="M2.4 5.8h2.6M2.4 8h2.6" fill="none" stroke="#6b6967" stroke-width="0.8"/><path d="M5.8 5.8h6L9.8 8.2v3H8v-3z" fill="#6b6967" stroke="#6b6967" stroke-width="0.5"/></svg></div>
<div class="vi sel" style="left:815.57px;top:225.85px"><svg viewBox="0 0 12 12"><rect x="1" y="1.2" width="10" height="9.8" fill="#f3f2f1" stroke="#6b6967" stroke-width="0.9"/><path d="M1 2.5h10" fill="none" stroke="#6b6967" stroke-width="1.4"/><path d="M1 5.6h10M1 8.2h10M4.3 3.4v7.6M7.7 3.4v7.6" fill="none" stroke="#6b6967" stroke-width="0.5"/></svg></div>
<div class="vi" style="left:830.89px;top:225.85px"><svg viewBox="0 0 12 12"><rect x="1" y="1.2" width="10" height="9.8" fill="#efedeb" stroke="#6b6967" stroke-width="0.9"/><path d="M1 2.5h10" fill="none" stroke="#6b6967" stroke-width="1.5"/><rect x="4.4" y="5.6" width="6.4" height="5.2" fill="#479de1"/><rect x="7.8" y="3.4" width="3" height="2.2" fill="#479de1"/><path d="M4.4 8.2h6.4M7.7 3.4v7.4" fill="none" stroke="#d6e9f8" stroke-width="0.5"/><path d="M1 5.6h3.3M1 8.2h3.3M4.3 3.4v7.6" fill="none" stroke="#6b6967" stroke-width="0.6"/></svg></div>
<div class="vi" style="left:846.21px;top:225.85px"><span class="vt">R</span></div>
<div class="vi" style="left:861.53px;top:225.85px"><span class="vt py">Py</span></div>
<div class="vi" style="left:876.85px;top:225.85px"><svg viewBox="0 0 12 12"><path d="M1 .8V11H11.5" fill="none" stroke="#6b6967" stroke-width="0.9"/><path d="M1.4 2.6H9.4" fill="none" stroke="#479de1" stroke-width="0.9"/><circle cx="9.9" cy="2.6" r="1.4" fill="#479de1"/><path d="M1.4 5.4h5M1.4 7.8h3.4" fill="none" stroke="#4a4846" stroke-width="0.8"/></svg></div>
<div class="vi" style="left:800.25px;top:241.05px"><svg viewBox="0 0 12 12"><circle cx="2.2" cy="6" r="1.7" fill="#479de1"/><path d="M3.8 6h2.4M6 2.3v7.4M6 2.3h1.4M6 9.7h1.4" fill="none" stroke="#479de1" stroke-width="0.8"/><rect x="7.2" y="0.9" width="3.8" height="2.8" fill="#479de1" rx=".6"/><rect x="7.2" y="4.6" width="3.8" height="2.8" fill="#479de1" rx=".6"/><rect x="7.2" y="8.3" width="3.8" height="2.8" fill="#479de1" rx=".6"/></svg></div>
<div class="vi" style="left:815.57px;top:241.05px"><svg viewBox="0 0 12 12"><path d="M.9 1.4H11.1V8.4H5.2L3 10.8V8.4H.9z" fill="#faf9f8" stroke="#479de1" stroke-width="1" stroke-linejoin="round"/></svg></div>
<div class="vi" style="left:830.89px;top:241.05px"><svg viewBox="0 0 12 12"><path d="M2.6 1H7.6L10.2 3.6V11H2.6z" fill="#faf9f8" stroke="#6b6967" stroke-width="0.9" stroke-linejoin="round"/><path d="M7.4 1v2.8h2.8" fill="none" stroke="#6b6967" stroke-width="0.7"/><path d="M5 7.6h3.6M5 9.2h2.4" fill="none" stroke="#9ccbee" stroke-width="0.8"/><path d="M.6 5.4h3.2M2.8 4.2 4 5.4 2.8 6.6" fill="none" stroke="#479de1" stroke-width="0.9"/></svg></div>
<div class="vi" style="left:846.21px;top:241.05px"><svg viewBox="0 0 12 12"><path d="M2.4 1H7.4L10 3.6V11H2.4z" fill="#faf9f8" stroke="#6b6967" stroke-width="1" stroke-linejoin="round"/><path d="M2.8 10.7V7.6h1.7v1.3h1.4V6.2h1.5v2h1.4v2.5z" fill="#4a4846"/><path d="M7.2 1v2.8H10" fill="none" stroke="#6b6967" stroke-width="0.8"/></svg></div>
<div class="vi" style="left:861.53px;top:241.05px"><svg viewBox="0 0 12 12"><rect x="1.6" y="1.6" width="9" height="9" fill="#faf9f8" stroke="#479de1" stroke-width="1.1"/><path d="M4.4 8.6 8.6 3.6" fill="none" stroke="#479de1" stroke-width="1.2"/><path d="M8 6.4h2.6" fill="none" stroke="#9ccbee" stroke-width="0.8"/><rect x="0.3" y="0.5" width="2.9" height="4.2" fill="#e8812d" rx=".6"/><path d="M1 2h1.5" fill="none" stroke="#fbd9b8" stroke-width="0.5"/><circle cx="10.9" cy="7.6" r=".9" fill="#e8812d"/><circle cx="9.6" cy="10.6" r="1.3" fill="#e8812d"/></svg></div>
<div class="vi" style="left:876.85px;top:241.05px"><svg viewBox="0 0 12 12"><path d="M6 1.3 11 6 6 10.7 1 6z" fill="#faf9f8" stroke="#b86dcb" stroke-width="1.5" stroke-linejoin="round"/><path d="M3.5 3.6 8.5 8.4M8.5 3.6 3.5 8.4" fill="none" stroke="#b86dcb" stroke-width="1.3"/></svg></div>
<div class="vi" style="left:800.25px;top:256.25px"><svg viewBox="0 0 12 12"><path d="M1 1.4H5L10.6 6 5 10.6H1L6.6 6z" fill="#d9ebf9" stroke="#479de1" stroke-width="1.2" stroke-linejoin="round"/><path d="M3 1.8 8.6 6M5 7.6 2.4 10.2M7.6 6.4 4 10.4" fill="none" stroke="#479de1" stroke-width="0.9"/></svg></div>
<div class="vi" style="left:815.57px;top:256.25px"><svg viewBox="0 0 12 12"><circle cx="2.2" cy="6.2" r=".8" fill="#8a8886"/><circle cx="5.6" cy="6.2" r=".8" fill="#8a8886"/><circle cx="9" cy="6.2" r=".8" fill="#8a8886"/></svg></div>
<div class="sm" style="left:801.6px;top:277.9px;font-size:7.2px">Columns</div>
<div class="abs" style="left:798px;top:291px;width:91.4px;height:100px;background:#fff"></div>
<div class="well" style="top:292.60px"><span>Obligation ID</span><svg class="wv" viewBox="0 0 8 6"><path d="M.8 1.2 4 4.6 7.2 1.2" fill="none" stroke="#7a7876" stroke-width=".8"/></svg><svg class="wx" viewBox="0 0 6 6"><path d="M.6.6 5.4 5.4M5.4.6.6 5.4" stroke="#7a7876" stroke-width=".8"/></svg></div>
<div class="well" style="top:306.20px"><span>Lifetime Fulfillments</span><svg class="wv" viewBox="0 0 8 6"><path d="M.8 1.2 4 4.6 7.2 1.2" fill="none" stroke="#7a7876" stroke-width=".8"/></svg><svg class="wx" viewBox="0 0 6 6"><path d="M.6.6 5.4 5.4M5.4.6.6 5.4" stroke="#7a7876" stroke-width=".8"/></svg></div>
<div class="well" style="top:319.80px"><span>Fulfillments created Ti...</span><svg class="wv" viewBox="0 0 8 6"><path d="M.8 1.2 4 4.6 7.2 1.2" fill="none" stroke="#7a7876" stroke-width=".8"/></svg><svg class="wx" viewBox="0 0 6 6"><path d="M.6.6 5.4 5.4M5.4.6.6 5.4" stroke="#7a7876" stroke-width=".8"/></svg></div>
<div class="well" style="top:333.40px"><span>Average of Obligation...</span><svg class="wv" viewBox="0 0 8 6"><path d="M.8 1.2 4 4.6 7.2 1.2" fill="none" stroke="#7a7876" stroke-width=".8"/></svg><svg class="wx" viewBox="0 0 6 6"><path d="M.6.6 5.4 5.4M5.4.6.6 5.4" stroke="#7a7876" stroke-width=".8"/></svg></div>
<div class="well" style="top:347.00px"><span>Average of Fulfillment...</span><svg class="wv" viewBox="0 0 8 6"><path d="M.8 1.2 4 4.6 7.2 1.2" fill="none" stroke="#7a7876" stroke-width=".8"/></svg><svg class="wx" viewBox="0 0 6 6"><path d="M.6.6 5.4 5.4M5.4.6.6 5.4" stroke="#7a7876" stroke-width=".8"/></svg></div>
<div class="well" style="top:360.60px"><span>Average of Obligation...</span><svg class="wv" viewBox="0 0 8 6"><path d="M.8 1.2 4 4.6 7.2 1.2" fill="none" stroke="#7a7876" stroke-width=".8"/></svg><svg class="wx" viewBox="0 0 6 6"><path d="M.6.6 5.4 5.4M5.4.6.6 5.4" stroke="#7a7876" stroke-width=".8"/></svg></div>
<div class="well" style="top:374.20px"><span>Fulfillment Overdue (%)</span><svg class="wv" viewBox="0 0 8 6"><path d="M.8 1.2 4 4.6 7.2 1.2" fill="none" stroke="#7a7876" stroke-width=".8"/></svg><svg class="wx" viewBox="0 0 6 6"><path d="M.6.6 5.4 5.4M5.4.6.6 5.4" stroke="#7a7876" stroke-width=".8"/></svg></div>
<div class="sm" style="left:801.8px;top:397.7px;font-weight:bold;font-size:6.9px;color:#504e4c">Drill through</div>
<div class="sm" style="left:801.6px;top:410.6px;font-size:7.1px">Cross-report</div>
<svg class="abs" style="left:871px;top:410px;width:20px;height:11px" viewBox="0 0 20 11"><rect x="1.6" y="1.5" width="16.8" height="8.3" rx="4.15" fill="#fff" stroke="#8a8886" stroke-width=".8"/><circle cx="6.4" cy="5.65" r="2.1" fill="#3b3a39"/><text x="9.4" y="7.4" font-family="Liberation Sans, sans-serif" font-size="4.8" fill="#7a7876">Off</text></svg>
<div class="sm" style="left:801.6px;top:425.6px;font-size:7.05px">Keep all filters</div>
<svg class="abs" style="left:871px;top:425px;width:20px;height:11px" viewBox="0 0 20 11"><rect x="1.4" y="1.3" width="17.2" height="8.5" rx="4.25" fill="#4a4846"/><circle cx="14.6" cy="5.55" r="2.2" fill="#fff"/><text x="4.4" y="7.2" font-family="Liberation Sans, sans-serif" font-size="4.6" fill="#c8c6c4">On</text></svg>
<div class="abs" style="left:798px;top:441px;width:91.4px;height:13px;background:#fff"></div>
<div class="sm" style="left:801.8px;top:443.2px;font-size:7.42px;color:#605e5c">Add drill-through fields here</div>

<!-- fields pane -->
<div id="fld"></div>
<div class="pt" style="left:898.6px;top:107.2px">Fields</div>
<svg class="abs" style="left:1111.6px;top:109px;width:8px;height:7.6px" viewBox="0 0 8 7.6"><path d="M.6.5 3.6 3.8.6 7.1M4.2.5 7.2 3.8 4.2 7.1" fill="none" stroke="#605e5c" stroke-width=".85"/></svg>
<div class="abs" style="left:896px;top:126.8px;width:230px;height:14.4px;background:#fff;border:1px solid #c8c6c4;border-radius:2px"></div>
<svg class="abs" style="left:899.8px;top:130.4px;width:8px;height:8px" viewBox="0 0 8 8"><circle cx="4.8" cy="3.2" r="2.5" fill="none" stroke="#605e5c" stroke-width=".8"/><path d="M3 5 .6 7.4" stroke="#605e5c" stroke-width=".85"/></svg>
<div class="sm" style="left:911.8px;top:129.8px;font-size:7.8px;color:#605e5c">Search</div>

<!-- clipped row -->
<div class="abs" style="left:896px;top:144.4px;width:220px;height:6px;overflow:hidden"><div class="f" style="left:0;top:-5.7px"><svg class="chev" style="left:2.6px" viewBox="0 0 6 8"><path d="M1.2 .8 4.6 4 1.2 7.2" fill="none" stroke="#7a7876" stroke-width=".9"/></svg><svg class="abs" style="left:10.2px;top:2.6px;width:8px;height:8px" viewBox="0 0 8 8"><path d="M.4 1.1h7.2M.4 3h7.2M.4 4.9h7.2M.4 6.8h7.2" stroke="#484644" stroke-width="1.15"/></svg><span class="fl" style="left:20.4px">Fulfillments_TeamMembers</span></div></div>
<!-- Last refreshed -->
<div class="f" style="top:151.8px"><svg class="chev" style="left:2.6px" viewBox="0 0 6 8"><path d="M1.2 .8 4.6 4 1.2 7.2" fill="none" stroke="#7a7876" stroke-width=".9"/></svg><svg class="abs" style="left:10.2px;top:2.6px;width:8px;height:8px" viewBox="0 0 8 8"><path d="M.4 1.1h7.2M.4 3h7.2M.4 4.9h7.2M.4 6.8h7.2" stroke="#484644" stroke-width="1.15"/><path d="M2.7 2.2v5.4M5.3 2.2v5.4" stroke="#f3f2f1" stroke-width=".3"/></svg><span class="fl" style="left:20.4px">Last Refreshed DateTime</span></div>
<!-- Obligations -->
<div class="abs" style="left:896.4px;top:164.8px;width:219.6px;height:12.2px;background:#d0cecc"></div>
<div class="f" style="top:164.8px"><svg class="abs" style="left:1.6px;top:4.2px;width:7.4px;height:5.4px" viewBox="0 0 7 5"><path d="M.6.8 3.5 4 6.4.8" fill="none" stroke="#7a7876" stroke-width=".85"/></svg><svg class="abs" style="left:10.2px;top:2.2px;width:8px;height:8px" viewBox="0 0 8 8"><path d="M.4 1.1h7.2M.4 3h7.2M.4 4.9h7.2M.4 6.8h7.2" stroke="#484644" stroke-width="1.15"/><path d="M2.7 2.2v5.4M5.3 2.2v5.4" stroke="#d0cecc" stroke-width=".3"/></svg><span class="abs" style="left:14.6px;top:7.4px;width:5.4px;height:5.4px;border-radius:3px;background:#f2c811"></span><svg class="abs" style="left:15.4px;top:8.4px;width:3.8px;height:3.4px" viewBox="0 0 3.8 3.4"><path d="M.5 1.8 1.4 2.7 3.3.7" fill="none" stroke="#3b3a39" stroke-width=".7"/></svg><span class="fl" style="left:20.4px">Obligations</span></div>
<div class="f" style="top:178.20px"><span class="ck"></span><span class="fl">Additional Fulfillment Approver</span></div>
<div class="f" style="top:191.29px"><span class="ck"></span><span class="fl">Additional Fulfillment Approver(s) Name</span></div>
<div class="f" style="top:204.39px"><span class="ck"></span><span class="fl">Additional Fulfillment Owner</span></div>
<div class="f" style="top:217.48px"><span class="ck"></span><span class="fl">Additional Fulfillment Owner(s) Name</span></div>
<div class="f" style="top:230.58px"><span class="ck"></span><span class="fl">Additional Users for Fulfillment</span></div>
<div class="f" style="top:243.68px"><span class="ck"></span><span class="fl">Allow Auto Split</span></div>
<div class="f" style="top:256.77px"><span class="ck"></span><span class="fl">Allow Cascade Action</span></div>
<div class="f" style="top:269.87px"><span class="ck"></span><span class="fl">Allow Fulfillment Tracking</span></div>
<div class="f" style="top:282.96px"><span class="ck"></span><span class="fl">Allow Inheritance</span></div>
<div class="f" style="top:296.06px"><span class="ck"></span><span class="fl">Business Status</span></div>
<div class="f" style="top:309.15px"><span class="ck"></span><span class="fl">Business Unit</span></div>
<div class="f" style="top:322.25px"><span class="ck"></span><span class="fl">ContractType</span></div>
<div class="f" style="top:335.34px"><svg class="chev" viewBox="0 0 6 8"><path d="M1.2 .8 4.6 4 1.2 7.2" fill="none" stroke="#7a7876" stroke-width=".9"/></svg><span class="ck"></span><svg class="ti" viewBox="0 0 9 9"><rect x=".5" y="1.1" width="8" height="7.4" rx=".6" fill="#faf9f8" stroke="#605e5c" stroke-width=".8"/><path d="M.5 3.1h8" stroke="#605e5c" stroke-width=".8"/><path d="M2.4 .3v1.4M6.6 .3v1.4" stroke="#605e5c" stroke-width=".8"/><path d="M.8 4.9h7.4M.8 6.7h7.4M3.1 3.3v5M5.9 3.3v5" stroke="#a19f9d" stroke-width=".45"/></svg><span class="fl">Created Date</span></div>
<div class="f" style="top:348.44px"><svg class="chev" viewBox="0 0 6 8"><path d="M1.2 .8 4.6 4 1.2 7.2" fill="none" stroke="#7a7876" stroke-width=".9"/></svg><span class="ck"></span><svg class="ti" viewBox="0 0 9 9"><rect x=".5" y="1.1" width="8" height="7.4" rx=".6" fill="#faf9f8" stroke="#605e5c" stroke-width=".8"/><path d="M.5 3.1h8" stroke="#605e5c" stroke-width=".8"/><path d="M2.4 .3v1.4M6.6 .3v1.4" stroke="#605e5c" stroke-width=".8"/><path d="M.8 4.9h7.4M.8 6.7h7.4M3.1 3.3v5M5.9 3.3v5" stroke="#a19f9d" stroke-width=".45"/></svg><span class="fl">Due Date</span></div>
<div class="f" style="top:361.53px"><span class="ck"></span><span class="fl">Expected Measure</span></div>
<div class="f" style="top:374.62px"><span class="ck"></span><span class="fl">Financial Impact due to Non-Fulfillment</span></div>
<div class="f" style="top:387.72px"><svg class="chev" viewBox="0 0 6 8"><path d="M1.2 .8 4.6 4 1.2 7.2" fill="none" stroke="#7a7876" stroke-width=".9"/></svg><span class="ck"></span><svg class="ti" viewBox="0 0 9 9"><rect x=".5" y="1.1" width="8" height="7.4" rx=".6" fill="#faf9f8" stroke="#605e5c" stroke-width=".8"/><path d="M.5 3.1h8" stroke="#605e5c" stroke-width=".8"/><path d="M2.4 .3v1.4M6.6 .3v1.4" stroke="#605e5c" stroke-width=".8"/><path d="M.8 4.9h7.4M.8 6.7h7.4M3.1 3.3v5M5.9 3.3v5" stroke="#a19f9d" stroke-width=".45"/></svg><span class="fl">First Fulfillment Due Date</span></div>
<div class="f" style="top:400.81px"><span class="ck"></span><span class="sg">&#8721;</span><span class="fl">Fulfillment Approver(s)</span></div>
<div class="f" style="top:413.91px"><span class="ck"></span><span class="fl">Fulfillment Approver(s) Name</span></div>
<div class="f" style="top:427.00px"><span class="ck on"><svg viewBox="0 0 7 7"><path d="M1.4 3.6 2.9 5 5.6 2" fill="none" stroke="#252423" stroke-width=".9"/></svg></span><svg class="ti" viewBox="0 0 9 9"><rect x=".5" y="1" width="8" height="7" fill="none" stroke="#605e5c" stroke-width=".8"/><path d="M.5 3.2h8M3 3.2v4.8M3 5.4h5.5" stroke="#605e5c" stroke-width=".7"/><rect x="5" y="5.5" width="4" height="3.5" fill="#605e5c"/></svg><span class="fl">Fulfillment Completion (%)</span></div>
<div class="f" style="top:440.10px"><span class="ck on"><svg viewBox="0 0 7 7"><path d="M1.4 3.6 2.9 5 5.6 2" fill="none" stroke="#252423" stroke-width=".9"/></svg></span><svg class="ti" viewBox="0 0 9 9"><rect x="1.5" y=".6" width="6" height="7.8" fill="none" stroke="#605e5c" stroke-width=".8"/><path d="M1.5 3h6" stroke="#605e5c" stroke-width=".9"/><path d="M3 4.7h3M3 6.3h3" stroke="#8a8886" stroke-width=".6"/></svg><span class="fl">Fulfillment Overdue (%)</span></div>
<div class="f" style="top:453.19px"><span class="ck"></span><span class="sg">&#8721;</span><span class="fl">Fulfillment Owner(s)</span></div>
<div class="f" style="top:466.29px"><span class="ck"></span><span class="fl">Fulfillment Owner(s) Name</span></div>
<div class="f" style="top:479.38px"><span class="ck"></span><span class="fl">Functional Team</span></div>
<div class="f" style="top:492.48px"><span class="ck"></span><span class="fl">Holding Entity ID</span></div>
<div class="f" style="top:505.58px"><span class="ck"></span><span class="fl">Holding Entity Name</span></div>
<div class="f" style="top:518.67px"><span class="ck"></span><span class="fl">Holding Entity Parent Clause Name</span></div>
<div class="f" style="top:531.76px"><span class="ck"></span><span class="fl">Holding Entity Section Name</span></div>
<div class="f" style="top:544.86px"><span class="ck"></span><span class="fl">Holding Entity Sub-Clause Name</span></div>
<div class="f" style="top:557.95px"><span class="ck"></span><span class="fl">ICMContractTypeName</span></div>
<div class="f" style="top:571.05px"><span class="ck"></span><span class="fl">ICMOMAppInheritedFromId</span></div>
<div class="f" style="top:584.14px"><span class="ck"></span><span class="fl">Impact due to Non-Fulfillment</span></div>
<div class="f" style="top:597.24px"><span class="ck"></span><span class="fl">KPI Category</span></div>
<div class="f" style="top:610.34px"><span class="ck on"><svg viewBox="0 0 7 7"><path d="M1.4 3.6 2.9 5 5.6 2" fill="none" stroke="#252423" stroke-width=".9"/></svg></span><svg class="ti" viewBox="0 0 9 9"><rect x=".5" y="1" width="8" height="7" fill="none" stroke="#605e5c" stroke-width=".8"/><path d="M.5 3.2h8M3 3.2v4.8M3 5.4h5.5" stroke="#605e5c" stroke-width=".7"/><rect x="5" y="5.5" width="4" height="3.5" fill="#605e5c"/></svg><span class="fl">Lifetime Fulfillments for Obligation</span></div>
<div class="f" style="top:623.43px"><span class="ck"></span><span class="fl">Linked Discovered Obligation Id</span></div>
<div class="f" style="top:636.53px"><span class="ck"></span><span class="fl">Metric</span></div>
<div class="f" style="top:649.62px"><span class="ck"></span><span class="fl">Minimum Permitted Measure</span></div>
<div class="f" style="top:662.72px"><svg class="chev" viewBox="0 0 6 8"><path d="M1.2 .8 4.6 4 1.2 7.2" fill="none" stroke="#7a7876" stroke-width=".9"/></svg><span class="ck"></span><svg class="ti" viewBox="0 0 9 9"><rect x=".5" y="1.1" width="8" height="7.4" rx=".6" fill="#faf9f8" stroke="#605e5c" stroke-width=".8"/><path d="M.5 3.1h8" stroke="#605e5c" stroke-width=".8"/><path d="M2.4 .3v1.4M6.6 .3v1.4" stroke="#605e5c" stroke-width=".8"/><path d="M.8 4.9h7.4M.8 6.7h7.4M3.1 3.3v5M5.9 3.3v5" stroke="#a19f9d" stroke-width=".45"/></svg><span class="fl">Modified Date</span></div>
<!-- fields scrollbar -->
<div class="abs" style="left:1116.4px;top:169px;width:2.6px;height:260px;background:#c8c6c4"></div>

</div></div>
</body></html>
